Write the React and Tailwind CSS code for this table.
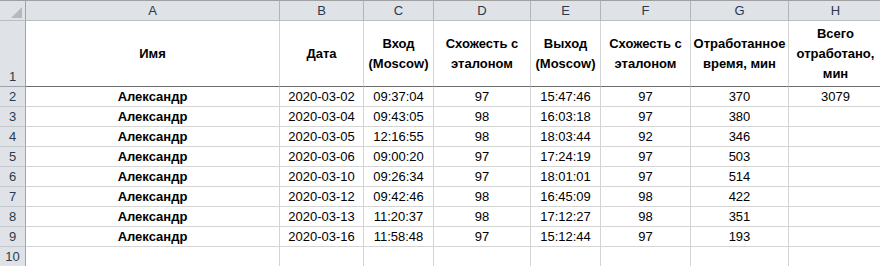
import React from "react";

const cols = ["A", "B", "C", "D", "E", "F", "G", "H"];

const rows = [
  ["Александр", "2020-03-02", "09:37:04", "97", "15:47:46", "97", "370", "3079"],
  ["Александр", "2020-03-04", "09:43:05", "98", "16:03:18", "97", "380", ""],
  ["Александр", "2020-03-05", "12:16:55", "98", "18:03:44", "92", "346", ""],
  ["Александр", "2020-03-06", "09:00:20", "97", "17:24:19", "97", "503", ""],
  ["Александр", "2020-03-10", "09:26:34", "97", "18:01:01", "97", "514", ""],
  ["Александр", "2020-03-12", "09:42:46", "98", "16:45:09", "98", "422", ""],
  ["Александр", "2020-03-13", "11:20:37", "98", "17:12:27", "98", "351", ""],
  ["Александр", "2020-03-16", "11:58:48", "97", "15:12:44", "97", "193", ""],
  ["", "", "", "", "", "", "", ""],
];

const titles = [
  ["Имя"],
  ["Дата"],
  ["Вход", "(Moscow)"],
  ["Схожесть с", "эталоном"],
  ["Выход", "(Moscow)"],
  ["Схожесть с", "эталоном"],
  ["Отработанное", "время, мин"],
  ["Всего", "отработано,", "мин"],
];

const rowHead =
  "bg-[#dfe2e6] border-r border-r-[#9ea3a9] border-b border-b-[#c5c9ce] text-[#2b3a4d] flex justify-center";
const cell = "border-r border-b border-[#d4d4d4] flex items-center justify-center text-black whitespace-nowrap";

export default function App() {
  return (
    <div className="w-[880px] h-[266px] overflow-hidden bg-white font-['Liberation_Sans',Arial,sans-serif] text-[13px] leading-[19px]">
      <div className="grid grid-cols-[26px_254px_84px_70px_97px_70px_90px_98px_94px] grid-rows-[21px_66px_repeat(9,20px)] w-[883px]">
        {/* column headers */}
        <div className="bg-[#dfe2e6] border-t border-t-[#a0a0a0] border-r border-r-[#9ea3a9] border-b border-b-[#b9bec3] relative">
          <svg className="absolute left-[11px] top-[6px]" width="11" height="11" viewBox="0 0 11 11">
            <polygon points="11,0 11,11 0,11" fill="#b5b9be" />
          </svg>
        </div>
        {cols.map((c) => (
          <div
            key={c}
            className="bg-[#dfe2e6] border-t border-t-[#a0a0a0] border-r border-r-[#b0b5ba] border-b border-b-[#b9bec3] flex items-center justify-center text-[#2b3a4d]"
          >
            {c}
          </div>
        ))}

        {/* row 1 */}
        <div className={rowHead + " items-end !border-b-[#9ea3a9]"}>1</div>
        {titles.map((t, i) => (
          <div
            key={i}
            className="border-r border-[#d4d4d4] border-b-[1px] border-b-[#6b6b6b] flex flex-col items-center justify-center font-bold leading-[20px] text-black"
          >
            {t.map((line, j) => (
              <span key={j}>{line}</span>
            ))}
          </div>
        ))}

        {/* data rows */}
        {rows.map((r, i) => (
          <React.Fragment key={i}>
            <div className={rowHead + " items-center"}>{i + 2}</div>
            {r.map((v, j) => (
              <div key={j} className={cell + (j === 0 ? " font-bold" : "")}>
                {v}
              </div>
            ))}
          </React.Fragment>
        ))}
      </div>
    </div>
  );
}
